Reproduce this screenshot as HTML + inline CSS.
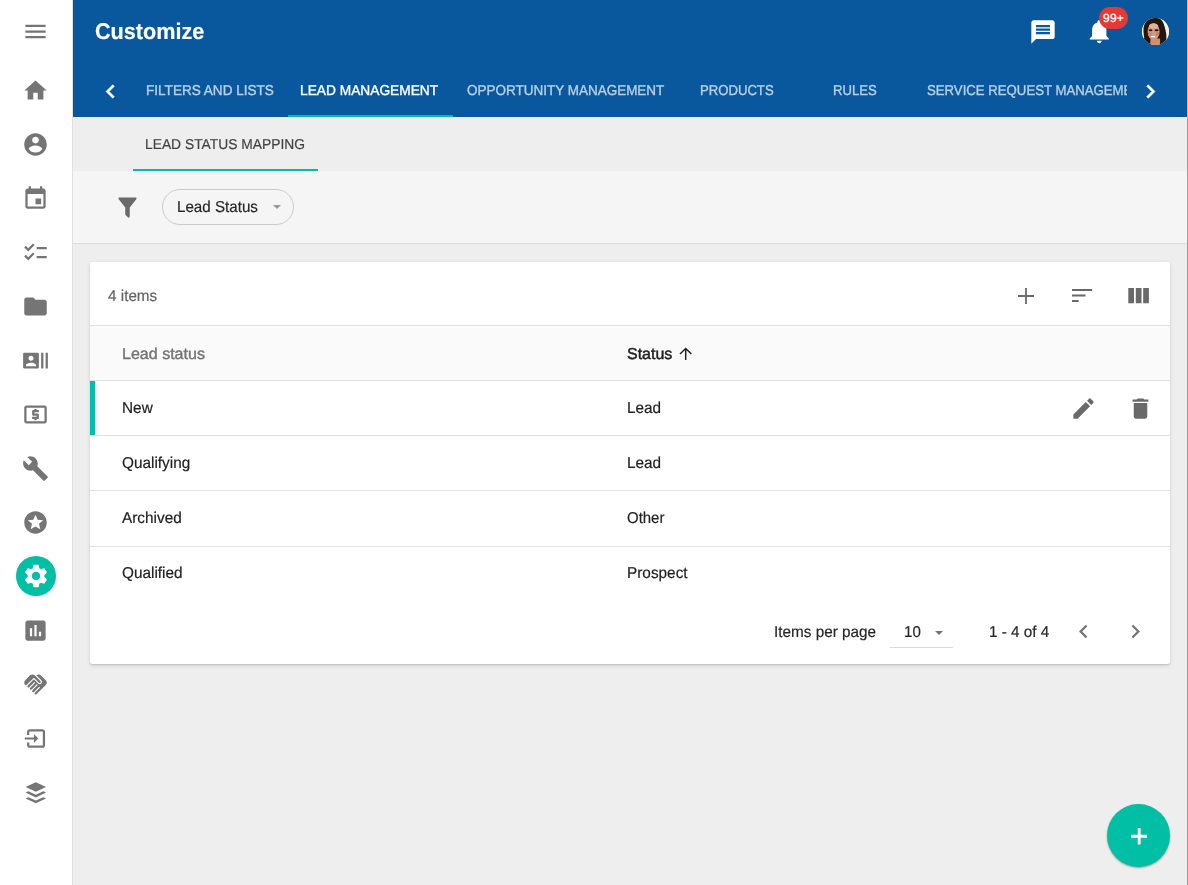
<!DOCTYPE html>
<html lang="en">
<head>
<meta charset="utf-8">
<title>Customize</title>
<style>
*{box-sizing:border-box;margin:0;padding:0}
html,body{width:1188px;height:885px;overflow:hidden;background:#eeeeee}
body{position:relative;font-family:"Liberation Sans",Arial,sans-serif;font-size:15.75px;color:#212121;-webkit-font-smoothing:antialiased;text-rendering:geometricPrecision}
.abs{position:absolute}
.t{position:absolute;white-space:nowrap;line-height:20px;transform-origin:0 50%;-webkit-text-stroke:.18px currentColor}
.m{-webkit-text-stroke:0.4px currentColor}
.tab.m{-webkit-text-stroke:0.38px currentColor}
svg{display:block}
/* sidebar */
#side{position:absolute;left:0;top:0;width:73px;height:885px;background:#fff;border-right:1px solid #e0e0e0}
#side svg{position:absolute;left:22.3px;width:27px;height:27px;fill:#757575}
#gearbg{position:absolute;left:16px;top:556px;width:40px;height:40px;border-radius:50%;background:#00bfa5}
/* header */
#hdr{position:absolute;left:73px;top:0;width:1114px;height:117px;background:#09589d}
#hdr svg{position:absolute;fill:#fff}
.tab{position:absolute;top:80px;color:#b8cfe3;font-size:14.3px;transform-origin:0 50%;white-space:nowrap;line-height:20px}
.tab.on{color:#fff}
#ink1{position:absolute;left:215px;top:114.750px;width:165px;height:2.250px;background:#00bfa5}
#badge{position:absolute;left:1026px;top:7px;width:29px;height:22px;border-radius:11px;background:#e53935;color:#fff;font-size:12px;-webkit-text-stroke:.25px #fff;text-align:center;line-height:22px;letter-spacing:.2px}
#avatar{position:absolute;left:1069px;top:18px;width:27px;height:27px;border-radius:50%;overflow:hidden;background:#f3efe9}
#avatar svg{position:absolute;left:0;top:0;width:27px;height:27px}
/* subtabs */
#sub{position:absolute;left:73px;top:117px;width:1114px;height:54px;background:#eeeeee}
#ink2{position:absolute;left:60px;top:51.750px;width:185px;height:2.250px;background:#00bfa5}
#filt{position:absolute;left:73px;top:171px;width:1114px;height:73px;background:#f5f5f5;border-bottom:1px solid #dcdcdc}
#chip{position:absolute;left:89.2px;top:18.3px;width:131.8px;height:35.4px;border:1.2px solid #cbcbcb;border-radius:18px;background:transparent}
/* card */
#card{position:absolute;left:90px;top:262px;width:1080px;height:401.8px;background:#fff;border-radius:2.25px;box-shadow:0 1px 1.5px rgba(0,0,0,.13),0 1.5px 4px rgba(0,0,0,.1)}
#card svg{position:absolute;fill:#696969}
#thead{position:absolute;left:0;top:63px;width:1080px;height:56px;background:#fafafa;border-top:1px solid #e0e0e0;border-bottom:1px solid #e0e0e0}
.row{position:absolute;left:0;width:1080px;height:1px;background:#e0e0e0}
#selbar{position:absolute;left:0;top:119px;width:5px;height:54px;background:#00bfa5}
#fab{position:absolute;left:1107px;top:804px;width:63px;height:63px;border-radius:50%;background:#00bfa5;box-shadow:0 1px 2px rgba(0,0,0,.35)}
#edge{position:absolute;left:1187px;top:0;width:1px;height:885px;background:#9e9e9e}
#edge i{position:absolute;left:0;top:0;width:1px;height:117px;background:#c4bcb4}
</style>
</head>
<body>
<!-- SIDEBAR -->
<div id="side">
<svg style="top:17.5px" viewBox="0 0 24 24"><path d="M3 18h18v-2H3v2zm0-5h18v-2H3v2zm0-7v2h18V6H3z"/></svg>
<svg style="top:76.5px" viewBox="0 0 24 24"><path d="M10 20v-6h4v6h5v-8h3L12 3 2 12h3v8z"/></svg>
<svg style="top:130.5px" viewBox="0 0 24 24"><path d="M12 2C6.48 2 2 6.48 2 12s4.48 10 10 10 10-4.48 10-10S17.52 2 12 2zm0 3c1.66 0 3 1.34 3 3s-1.34 3-3 3-3-1.34-3-3 1.34-3 3-3zm0 14.2c-2.5 0-4.71-1.28-6-3.22.03-1.99 4-3.08 6-3.08 1.99 0 5.97 1.09 6 3.08-1.29 1.94-3.5 3.22-6 3.22z"/></svg>
<svg style="top:184.5px" viewBox="0 0 24 24"><path d="M17 12h-5v5h5v-5zM16 1v2H8V1H6v2H5c-1.11 0-1.99.9-1.99 2L3 19c0 1.1.89 2 2 2h14c1.1 0 2-.9 2-2V5c0-1.1-.9-2-2-2h-1V1h-2zm3 18H5V8h14v11z"/></svg>
<svg style="top:238.5px" viewBox="0 0 24 24"><path d="M22 7h-9v2h9V7zm0 8h-9v2h9v-2zM5.54 11L2 7.46l1.41-1.41 2.12 2.12 4.24-4.24 1.41 1.41L5.54 11zm0 8L2 15.46l1.41-1.41 2.12 2.12 4.24-4.24 1.41 1.41L5.54 19z"/></svg>
<svg style="top:292.5px" viewBox="0 0 24 24"><path d="M10 4H4c-1.1 0-1.99.9-1.99 2L2 18c0 1.1.9 2 2 2h16c1.1 0 2-.9 2-2V8c0-1.1-.9-2-2-2h-8l-2-2z"/></svg>
<svg style="top:346.5px" viewBox="0 0 24 24"><path d="M21 5v14h2V5h-2zm-4 14h2V5h-2v14zM14 5H2c-.55 0-1 .45-1 1v12c0 .55.45 1 1 1h12c.55 0 1-.45 1-1V6c0-.55-.45-1-1-1zM8 7.75c1.24 0 2.25 1.01 2.25 2.25S9.240 12.25 8 12.25 5.750 11.24 5.750 10 6.760 7.750 8 7.750zM12.500 17h-9v-.75c0-1.500 3-2.250 4.500-2.250s4.500.75 4.500 2.250V17z"/></svg>
<svg style="top:400.5px" viewBox="0 0 24 24"><path d="M11 17h2v-1h1c.55 0 1-.45 1-1v-3c0-.55-.45-1-1-1h-3v-1h4V8h-2V7h-2v1h-1c-.55 0-1 .45-1 1v3c0 .55.45 1 1 1h3v1H9v2h2v1zm9-13H4c-1.11 0-1.990.89-1.990 2L2 18c0 1.110.89 2 2 2h16c1.110 0 2-.89 2-2V6c0-1.110-.89-2-2-2zm0 14H4V6h16v12z"/></svg>
<svg style="top:454.5px" viewBox="0 0 24 24"><path d="M22.700 19l-9.100-9.100c.9-2.300.4-5-1.500-6.900-2-2-5-2.400-7.400-1.300L9 6 6 9 1.600 4.700C.4 7.100.9 10.100 2.900 12.100c1.900 1.900 4.600 2.400 6.900 1.500l9.100 9.100c.4.4 1 .4 1.400 0l2.300-2.300c.5-.4.5-1.100.1-1.400z"/></svg>
<svg style="top:508.5px" viewBox="0 0 24 24"><path d="M11.990 2C6.470 2 2 6.480 2 12s4.470 10 9.990 10C17.520 22 22 17.520 22 12S17.520 2 11.990 2zm4.240 16L12 15.450 7.770 18l1.120-4.810-3.730-3.230 4.920-.42L12 5l1.920 4.530 4.920.42-3.730 3.230L16.230 18z"/></svg>
<div id="gearbg"></div>
<svg style="top:562px;left:21.500px;width:28px;height:28px;fill:#fff" viewBox="0 0 24 24"><path d="M19.140 12.940c.04-.3.06-.61.06-.94 0-.32-.02-.64-.07-.94l2.030-1.580c.18-.14.230-.41.120-.61l-1.920-3.320c-.12-.22-.37-.29-.59-.22l-2.390.96c-.5-.38-1.030-.7-1.620-.94l-.36-2.540c-.04-.24-.24-.41-.48-.41h-3.840c-.24 0-.43.170-.47.410l-.36 2.540c-.59.240-1.130.57-1.620.94l-2.390-.96c-.22-.08-.47 0-.59.220L2.740 8.870c-.12.210-.08.470.12.610l2.030 1.580c-.05.3-.09.630-.09.940s.02.640.07.940l-2.030 1.580c-.18.140-.23.410-.12.610l1.920 3.320c.12.220.37.290.59.220l2.390-.96c.5.380 1.030.7 1.620.94l.36 2.540c.05.240.24.410.48.410h3.840c.24 0 .44-.17.470-.41l.36-2.540c.59-.24 1.130-.56 1.620-.94l2.390.96c.22.080.47 0 .59-.22l1.920-3.320c.12-.22.070-.47-.12-.61l-2.010-1.580zM12 15.600c-1.980 0-3.600-1.620-3.600-3.600s1.620-3.600 3.600-3.600 3.600 1.620 3.600 3.600-1.620 3.600-3.600 3.600z"/></svg>
<svg style="top:616.5px" viewBox="0 0 24 24"><path d="M19 3H5c-1.100 0-2 .9-2 2v14c0 1.100.9 2 2 2h14c1.100 0 2-.9 2-2V5c0-1.100-.9-2-2-2zM9 17H7v-7h2v7zm4 0h-2V7h2v10zm4 0h-2v-4h2v4z"/></svg>
<svg style="top:670.5px" viewBox="0 0 24 24"><path d="M16.48 10.41c-.39.39-1.04.39-1.43 0l-4.47-4.46-7.05 7.04-.66-.63c-1.17-1.17-1.17-3.07 0-4.24l4.24-4.24c1.17-1.17 3.07-1.17 4.24 0L16.48 9c.39.39.39 1.02 0 1.41zm.7-2.12c.78.78.78 2.05 0 2.83-1.27 1.27-2.61.22-2.83 0l-3.76-3.76-5.57 5.57c-.39.39-.39 1.02 0 1.41.39.39 1.02.39 1.42 0l4.62-4.62.71.71-4.62 4.62c-.39.39-.39 1.02 0 1.41.39.39 1.02.39 1.42 0l4.620-4.620.71.71-4.620 4.620c-.39.39-.39 1.020 0 1.410.39.39 1.020.39 1.410 0l4.620-4.620.71.71-4.620 4.620c-.39.39-.39 1.020 0 1.410.39.39 1.020.39 1.410 0l8.320-8.320c1.170-1.170 1.170-3.070 0-4.240l-4.240-4.240c-1.150-1.150-3.010-1.170-4.180-.06l4.470 4.470z"/></svg>
<svg style="top:724.5px" viewBox="0 0 24 24"><path d="M5.500 8.900V6.300a1.500 1.500 0 0 1 1.500-1.500h11a1.500 1.500 0 0 1 1.500 1.500v11.400a1.500 1.500 0 0 1-1.500 1.500h-11a1.500 1.500 0 0 1-1.500-1.500V15.500" fill="none" stroke="#757575" stroke-width="2"/><path d="M2.500 11.050h8.100V8l3.900 3.950-3.900 3.950v-3.050H2.500z"/></svg>
<svg style="top:778.5px" viewBox="0 0 24 24"><path d="M12.300 2.800L21.400 7.050 12.300 11.300 3.200 7.050zM3.200 12L5.600 10.900 12.300 13.900 19 10.900 21.400 12 12.300 16.350zM3.200 17.250L5.600 16.150 12.300 19.150 19 16.150 21.400 17.250 12.300 21.600z"/></svg>
</div>
<!-- HEADER -->
<div id="hdr">
<div class="t" id="title" style="left:21.60px;top:16.00px;font-size:22.75px;font-weight:bold;color:#fff;line-height:30px;transform:scaleX(0.9501)">Customize</div>
<svg style="left:956.200px;top:17.700px;width:28px;height:28px" viewBox="0 0 24 24"><path d="M20 2H4c-1.100 0-1.990.9-1.990 2L2 22l4-4h14c1.100 0 2-.9 2-2V4c0-1.100-.9-2-2-2zm-2 12H6v-2h12v2zm0-3H6V9h12v2zm0-3H6V6h12v2z"/></svg>
<svg style="left:1012px;top:16.800px;width:28.500px;height:28.500px" viewBox="0 0 24 24"><path d="M12 22c1.100 0 2-.9 2-2h-4c0 1.100.89 2 2 2zm6-6v-5c0-3.070-1.640-5.640-4.500-6.320V4c0-.83-.67-1.500-1.500-1.500s-1.500.67-1.500 1.500v.68C7.630 5.360 6 7.920 6 11v5l-2 2v1h16v-1l-2-2z"/></svg>
<div id="badge">99+</div>
<div id="avatar"><svg viewBox="0 0 27 27"><defs><filter id="bl" x="-5" y="-5" width="37" height="37" filterUnits="userSpaceOnUse"><feGaussianBlur stdDeviation="0.5"/></filter></defs><g filter="url(#bl)"><rect x="-4" y="-4" width="35" height="35" fill="#f4f1ec"/><path d="M1.500 14C1 3 7-2 14-1c6 1 9 7 8.800 14 .5 4 1.200 8-.8 12l-6 3H7C3 25 2 20 1.500 14z" fill="#21150f"/><ellipse cx="11.600" cy="13.500" rx="6" ry="8.600" fill="#d49b84"/><ellipse cx="11.500" cy="8" rx="4.500" ry="2.600" fill="#e0b39c"/><path d="M8.500 20.500h9.500l.5 8H8z" fill="#d58c6f"/><ellipse cx="8" cy="16" rx="2" ry="2.200" fill="#cf8a78"/><ellipse cx="15.500" cy="16" rx="1.800" ry="2.200" fill="#c98170"/><ellipse cx="8.600" cy="12.200" rx="1.900" ry="1" fill="#24140e"/><ellipse cx="14.600" cy="12.200" rx="2.100" ry="1" fill="#24140e"/><rect x="8.900" y="18.100" width="4.400" height="1.200" rx=".6" fill="#fff"/><path d="M3 19c1 3 3 6 6 8l-4 1-4-6z" fill="#21150f"/><path d="M17.500 7c2 3 2.500 9 1.500 14l-1 6 6-3c1-6 0-13-3-18z" fill="#21150f"/></g></svg></div>
<svg style="left:24.100px;top:78px;width:27px;height:27px;stroke:#fff;stroke-width:.5" viewBox="0 0 24 24"><path d="M15.410 7.410L14 6l-6 6 6 6 1.410-1.410L10.830 12z"/></svg>
<svg style="left:1063.700px;top:77.700px;width:27px;height:27px;stroke:#fff;stroke-width:.5" viewBox="0 0 24 24"><path d="M10 6L8.590 7.410 13.170 12l-4.580 4.590L10 18l6-6z"/></svg>
<div class="tab m" id="tb1" style="left:73.00px;top:81.00px;transform:scaleX(0.9490)">FILTERS AND LISTS</div>
<div class="tab m on" id="tb2" style="left:227.00px;top:81.00px;transform:scaleX(0.9610)">LEAD MANAGEMENT</div>
<div class="tab m" id="tb3" style="left:393.80px;top:81.00px;transform:scaleX(0.9434)">OPPORTUNITY MANAGEMENT</div>
<div class="tab m" id="tb4" style="left:627.00px;top:81.00px;transform:scaleX(0.9178)">PRODUCTS</div>
<div class="tab m" id="tb5" style="left:759.60px;top:81.00px;transform:scaleX(0.9179)">RULES</div>
<div class="tab m" id="tb6" style="left:853.9px;top:81px;width:217px;overflow:hidden;transform:scaleX(0.922)">SERVICE REQUEST MANAGEMENT</div>
<div id="ink1"></div>
</div>
<!-- SUBTABS -->
<div id="sub">
<div class="t" id="st1" style="font-size:14.3px;transform-origin:0 50%;left:72.00px;top:18.00px;color:#424242;transform:scaleX(0.9665)">LEAD STATUS MAPPING</div>
<div id="ink2"></div>
</div>
<!-- FILTER -->
<div id="filt">
<svg class="abs" style="left:40.900px;top:22.900px;width:27px;height:27px;fill:#6a6a6a" viewBox="0 0 24 24"><path d="M14,12V19.880C14.040,20.180 13.940,20.500 13.710,20.710C13.320,21.100 12.690,21.100 12.300,20.710L10.290,18.700C10.060,18.470 9.960,18.160 10,17.870V12H9.970L4.210,4.620C3.870,4.190 3.950,3.560 4.380,3.220C4.570,3.080 4.780,3 5,3V3H19V3C19.220,3 19.430,3.080 19.620,3.220C20.050,3.560 20.130,4.190 19.790,4.620L14.030,12H14Z"/></svg>
<div id="chip"></div>
<div class="t" id="chiptxt" style="left:104.20px;top:27.00px;color:#262626;transform:scaleX(0.9628)">Lead Status</div>
<svg class="abs" style="left:200.200px;top:34.300px;width:8px;height:4px;fill:#999" viewBox="0 0 8 4"><path d="M0 0h8L4 4z"/></svg>
</div>
<!-- CARD -->
<div id="card">
<div class="t" id="c_items" style="left:17.80px;top:25.00px;color:#616161;transform:scaleX(0.9698)">4 items</div>
<svg style="left:928px;top:25.500px;width:16px;height:16px" viewBox="0 0 16 16"><path d="M7.100 0h1.800v7.100H16v1.800H8.900V16H7.100V8.900H0V7.100h7.100z"/></svg>
<svg style="left:982px;top:26.800px;width:21px;height:14px" viewBox="0 0 21 14"><path d="M0 0h20.200v2.100H0zM0 5.400h13.500v2.100H0zM0 10.900h6.700v2.100H0z"/></svg>
<svg style="left:1038px;top:25.700px;width:21px;height:16px" viewBox="0 0 21 16"><path d="M.3 0h5.700v15.200H.3zM7.800 0h5.700v15.200H7.800zM15.200 0h5.700v15.200h-5.700z"/></svg>
<div id="thead"></div>
<div class="t m" id="h_lead" style="left:31.8px;top:83.00px;color:#757575;transform:scaleX(1.0181)">Lead status</div>
<div class="t m" id="h_status" style="-webkit-text-stroke-width:.45px;left:536.7px;top:83.00px;color:#212121;transform:scaleX(1.0139)">Status</div>
<svg style="left:587.800px;top:85px;width:15px;height:14px;fill:none;stroke:#212121;stroke-width:1.450" viewBox="0 0 15 14"><path d="M7.700 13V1.600M2 7.100l5.700-5.600 5.700 5.600"/></svg>
<div id="selbar"></div>
<div class="row" style="top:173px"></div>
<div class="row" style="top:228px"></div>
<div class="row" style="top:284px"></div>
<div class="t" id="r1a" style="left:31.8px;top:137.00px;transform:scaleX(0.975)">New</div>
<div class="t" id="r1b" style="left:536.6px;top:137.00px;transform:scaleX(0.975)">Lead</div>
<div class="t" id="r2a" style="left:31.8px;top:192.00px;transform:scaleX(0.975)">Qualifying</div>
<div class="t" id="r2b" style="left:536.6px;top:192.00px;transform:scaleX(0.975)">Lead</div>
<div class="t" id="r3a" style="left:31.8px;top:247.00px;transform:scaleX(0.975)">Archived</div>
<div class="t" id="r3b" style="left:536.8px;top:247.00px;transform:scaleX(0.95)">Other</div>
<div class="t" id="r4a" style="left:31.8px;top:302.00px;transform:scaleX(0.975)">Qualified</div>
<div class="t" id="r4b" style="left:536.6px;top:302.00px;transform:scaleX(0.975)">Prospect</div>
<svg style="left:979.600px;top:132.700px;width:27px;height:27px" viewBox="0 0 24 24"><path d="M3 17.250V21h3.750L17.810 9.940l-3.750-3.750L3 17.250zM20.710 7.040c.39-.39.39-1.020 0-1.410l-2.340-2.340c-.39-.39-1.020-.39-1.410 0l-1.830 1.830 3.750 3.750 1.830-1.830z"/></svg>
<svg style="left:1036.500px;top:132.700px;width:27px;height:27px" viewBox="0 0 24 24"><path d="M6 19c0 1.100.9 2 2 2h8c1.100 0 2-.9 2-2V7H6v12zM19 4h-3.500l-1-1h-5l-1 1H5v2h14V4z"/></svg>
<div class="t" id="p_ipp" style="left:684.40px;top:361.00px;color:#262626;transform:scaleX(0.9708)">Items per page</div>
<div class="t" id="p_10" style="left:814.00px;top:361.00px;color:#262626;transform:scaleX(0.9580)">10</div>
<svg style="left:845px;top:369px;width:8px;height:4px;fill:#757575" viewBox="0 0 8 4"><path d="M0 0h8L4 4z"/></svg>
<div class="abs" style="left:800px;top:385px;width:63px;height:1px;background:#d9d9d9"></div>
<div class="t" id="p_rng" style="left:898.60px;top:361.00px;color:#262626;transform:scaleX(0.9701)">1 - 4 of 4</div>
<svg style="left:980px;top:355.900px;width:27px;height:27px;fill:#757575" viewBox="0 0 24 24"><path d="M15.410 7.410L14 6l-6 6 6 6 1.410-1.410L10.830 12z"/></svg>
<svg style="left:1031.900px;top:355.900px;width:27px;height:27px;fill:#757575" viewBox="0 0 24 24"><path d="M10 6L8.590 7.410 13.170 12l-4.580 4.590L10 18l6-6z"/></svg>
</div>
<!-- FAB -->
<div id="fab"><svg style="position:absolute;left:23.500px;top:24.200px;width:16.400px;height:16.400px;fill:#fff" viewBox="0 0 16 16"><path d="M6.600 0h2.800v6.600H16v2.800H9.400V16H6.600V9.400H0V6.600h6.600z"/></svg></div>
<div id="edge"><i></i></div>
</body>
</html>
